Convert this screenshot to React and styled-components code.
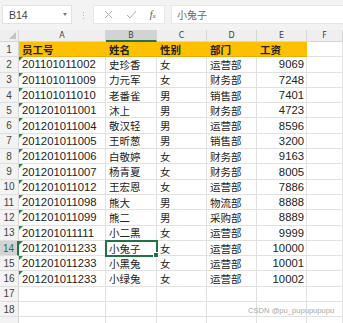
import React from "react";
import styled, { createGlobalStyle } from "styled-components";

const Global = createGlobalStyle`
  html, body {
    margin: 0;
    padding: 0;
    background: #ffffff;
    overflow: hidden;
  }
`;

const ROW_H = 15.3;
const COLS = "19px 87px 51px 50px 50px 50px 1fr";

const rows = [
  ["201101011002", "史珍香", "女", "运营部", 9069],
  ["201101011009", "力元军", "女", "财务部", 7248],
  ["201101011010", "老番雀", "男", "销售部", 7401],
  ["201201011001", "沐上", "男", "财务部", 4723],
  ["201201011004", "敬汉轻", "男", "运营部", 8596],
  ["201201011005", "王昕葱", "男", "销售部", 3200],
  ["201201011006", "白敬婷", "女", "财务部", 9163],
  ["201201011007", "杨青夏", "女", "财务部", 8005],
  ["201201011012", "王宏恩", "女", "运营部", 7886],
  ["201201011098", "熊大", "男", "物流部", 8888],
  ["201201011099", "熊二", "男", "采购部", 8889],
  ["201201011111", "小二黑", "女", "运营部", 9999],
  ["201201011233", "小兔子", "女", "运营部", 10000],
  ["201201011233", "小黑兔", "女", "运营部", 10001],
  ["201201011233", "小绿兔", "女", "运营部", 10002],
];

const Sheet = styled.div`
  width: 343px;
  height: 323px;
  background: #f3f3f3;
  position: relative;
  overflow: hidden;
  font-family: "Liberation Sans", "Noto Sans CJK SC", sans-serif;
`;

const Toolbar = styled.div`
  display: flex;
  align-items: center;
  height: 30px;
  padding: 0 0 0 2px;
  box-sizing: border-box;
`;

const NameBox = styled.div`
  display: flex;
  align-items: center;
  justify-content: space-between;
  width: 70px;
  height: 19px;
  margin-top: -1px;
  background: #fff;
  border: 1px solid #e2e2e2;
  box-sizing: border-box;
  padding: 0 4px 0 6px;
  font-size: 10.5px;
  color: #444;
`;

const Caret = styled.span`
  width: 0;
  height: 0;
  border-left: 2.5px solid transparent;
  border-right: 2.5px solid transparent;
  border-top: 3px solid #777;
`;

const Dots = styled.div`
  display: flex;
  flex-direction: column;
  gap: 2px;
  margin: 0 9px 0 11px;
  span {
    width: 1px;
    height: 1px;
    background: #b5b5b5;
  }
`;

const FxBox = styled.div`
  display: flex;
  align-items: center;
  justify-content: space-around;
  width: 72px;
  height: 19px;
  margin-top: -1px;
  background: #fff;
  border: 1px solid #e8e8e8;
  box-sizing: border-box;
  padding: 0 2px 0 4px;
`;

const Fx = styled.span`
  font-family: "Liberation Serif", serif;
  font-style: italic;
  font-size: 10px;
  color: #555;
  sub {
    font-size: 7px;
    vertical-align: baseline;
  }
`;

const Formula = styled.div`
  flex: 1;
  height: 19px;
  margin: -1px 0 0 6px;
  background: #fff;
  border: 1px solid #e8e8e8;
  border-right: none;
  box-sizing: border-box;
  padding-left: 5px;
  display: flex;
  align-items: center;
  font-family: "Noto Sans CJK SC", sans-serif;
  font-size: 10px;
  color: #666;
`;

const Grid = styled.div`
  display: grid;
  grid-template-columns: ${COLS};
  grid-template-rows: 12px repeat(19, ${ROW_H}px);
  background: #fff;
`;

const ColHead = styled.div`
  background: ${(p) => (p.$active ? "#d3d3d3" : "#efefef")};
  border-right: 1px solid #d6d6d6;
  border-bottom: ${(p) => (p.$active ? "2px solid #217346" : "1px solid #d6d6d6")};
  box-sizing: border-box;
  display: flex;
  align-items: center;
  justify-content: center;
  font-family: "DejaVu Sans", sans-serif;
  font-size: 8px;
  color: #444;
  position: relative;
`;

const Corner = styled(ColHead)`
  &::after {
    content: "";
    position: absolute;
    right: 2px;
    bottom: 2px;
    border-left: 7px solid transparent;
    border-bottom: 7px solid #c4c4c4;
  }
`;

const RowHead = styled.div`
  background: ${(p) => (p.$active ? "#d3d3d3" : "#f3f3f3")};
  border-right: ${(p) => (p.$active ? "2px solid #217346" : "1px solid #d6d6d6")};
  border-bottom: 1px solid #dedede;
  box-sizing: border-box;
  display: flex;
  align-items: center;
  justify-content: center;
  font-family: "Liberation Sans", sans-serif;
  font-size: 10px;
  color: ${(p) => (p.$active ? "#217346" : "#444")};
`;

const Cell = styled.div`
  position: relative;
  background: ${(p) => (p.$head ? "#ffc000" : "#fff")};
  border-right: 1px solid ${(p) => (p.$head ? "#ffc000" : "#e1e1e1")};
  border-bottom: 1px solid ${(p) => (p.$head ? "#e6ad00" : "#e1e1e1")};
  box-sizing: border-box;
  display: flex;
  align-items: center;
  justify-content: ${(p) => (p.$num ? "flex-end" : "flex-start")};
  padding: ${(p) => (p.$num ? "0 2px 0 0" : "0 0 0 3px")};
  font-family: ${(p) =>
    p.$digits ? '"Liberation Sans", sans-serif' : '"Noto Sans CJK SC", sans-serif'};
  font-size: ${(p) => (p.$digits ? "11.3px" : "10.5px")};
  font-weight: ${(p) => (p.$head ? 700 : 400)};
  color: #222;
  white-space: nowrap;
  overflow: visible;

  ${(p) =>
    p.$flag &&
    `&::before {
      content: "";
      position: absolute;
      left: 0;
      top: 0;
      border-right: 4px solid transparent;
      border-top: 4px solid #1e8a3f;
    }`}

  ${(p) =>
    p.$selected &&
    `outline: 2px solid #217346;
     outline-offset: -1px;
     z-index: 2;
     &::after {
       content: "";
       position: absolute;
       right: -3px;
       bottom: -3px;
       width: 4px;
       height: 4px;
       background: #217346;
       border: 1px solid #fff;
     }`}
`;

const Watermark = styled.div`
  position: absolute;
  left: 248px;
  top: 306px;
  font-family: "Liberation Sans", sans-serif;
  font-size: 7.6px;
  color: #a8a8a8;
  white-space: nowrap;
`;

const letters = ["A", "B", "C", "D", "E", "F"];

export default function App() {
  const header = ["员工号", "姓名", "性别", "部门", "工资"];
  return (
    <Sheet>
      <Global />
      <Toolbar>
        <NameBox>
          B14
          <Caret />
        </NameBox>
        <Dots>
          <span />
          <span />
          <span />
        </Dots>
        <FxBox>
          <svg width="9" height="9" viewBox="0 0 9 9">
            <path d="M1 1 L8 8 M8 1 L1 8" stroke="#b0b0b0" strokeWidth="1" />
          </svg>
          <svg width="11" height="9" viewBox="0 0 11 9">
            <path d="M1 5 L4 8 L10 1" stroke="#b0b0b0" strokeWidth="1" fill="none" />
          </svg>
          <Fx>
            f<sub>x</sub>
          </Fx>
        </FxBox>
        <Formula>小兔子</Formula>
      </Toolbar>
      <Grid>
        <Corner />
        {letters.map((l) => (
          <ColHead key={l} $active={l === "B"}>
            {l}
          </ColHead>
        ))}

        <RowHead>1</RowHead>
        {header.map((h) => (
          <Cell key={h} $head>
            {h}
          </Cell>
        ))}
        <Cell />

        {rows.map((r, i) => {
          const n = i + 2;
          return (
            <React.Fragment key={n}>
              <RowHead $active={n === 14}>{n}</RowHead>
              <Cell $digits $flag>
                {r[0]}
              </Cell>
              <Cell $selected={n === 14}>{r[1]}</Cell>
              <Cell>{r[2]}</Cell>
              <Cell>{r[3]}</Cell>
              <Cell $digits $num>
                {r[4]}
              </Cell>
              <Cell />
            </React.Fragment>
          );
        })}

        {[17, 18, 19].map((n) => (
          <React.Fragment key={n}>
            <RowHead>{n < 19 ? n : ""}</RowHead>
            {letters.map((l) => (
              <Cell key={l} />
            ))}
          </React.Fragment>
        ))}
      </Grid>
      <Watermark>CSDN @pu_pupupupupu</Watermark>
    </Sheet>
  );
}
